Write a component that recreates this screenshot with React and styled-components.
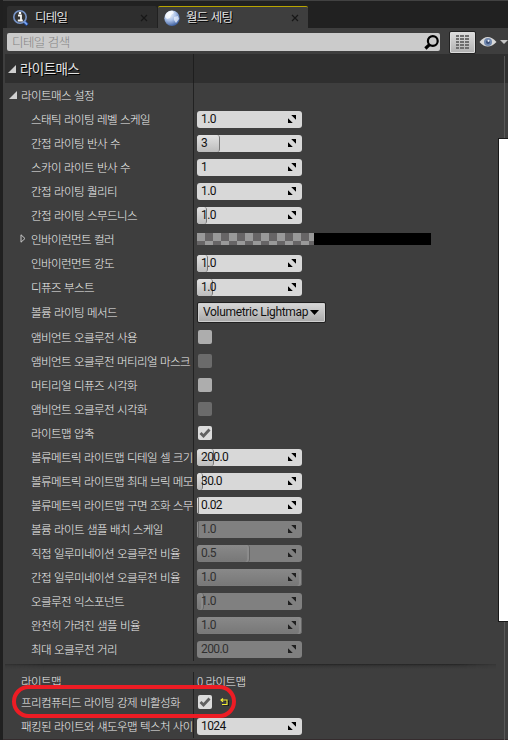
import React from "react";
import styled, { createGlobalStyle, css } from "styled-components";

const korean = `"Noto Sans CJK KR", "Noto Sans", sans-serif`;

const GlobalStyle = createGlobalStyle`
  * { box-sizing: border-box; }
  body { margin: 0; background: #3e3e3e; overflow: hidden; }
`;

const Window = styled.div`
  position: relative;
  width: 508px;
  height: 740px;
  padding-left: 3px;
  overflow: hidden;
  background: #3e3e3e;
  box-shadow: inset 3px 0 #202020, inset 0 -1px #352c2e;
  font-family: ${korean};
  font-size: 11.5px;
  font-weight: 300;
  letter-spacing: -0.58px;
  word-spacing: 1px;
  color: #f0f0f0;
`;

const TabBar = styled.div`
  display: flex;
  gap: 1px;
  height: 28px;
  padding: 5px 0 0 4px;
  background: #212121;
  border-top: 1px solid #424242;
`;

const Tab = styled.div`
  display: flex;
  align-items: center;
  width: 150px;
  height: 22px;
  padding: 0 9px 0 5px;
  gap: 5px;
  border-radius: 2px 2px 0 0;
  font-size: 12.5px;
  font-weight: 400;
  letter-spacing: -0.7px;
  color: #e0e0e0;
  text-shadow: 1px 1px 0 #000;
  background: ${(p) => (p.$active ? "#3e3e3e" : "#2e2e2e")};
  border-top: 1px solid ${(p) => (p.$active ? "#b9a500" : "#2e2e2e")};
`;

const TabLabel = styled.span`
  flex: 1;
  line-height: 19px;
  padding: 0 0 2px 0;
`;

const Toolbar = styled.div`
  display: flex;
  align-items: center;
  height: 26px;
  padding-left: 4px;
`;

const SearchBox = styled.div`
  display: flex;
  align-items: center;
  justify-content: space-between;
  width: 433px;
  height: 18px;
  margin: 2px 9px 0 0;
  padding: 0 1px 0 5px;
  border-radius: 2px;
  background: #cbcbcb;
  color: #848484;
  font-size: 12.5px;
  letter-spacing: -0.6px;
  line-height: 18px;
`;

const GridButton = styled.div`
  display: flex;
  align-items: center;
  justify-content: center;
  width: 27px;
  height: 23px;
  margin: 2px 3px 0 0;
  border: 1px solid #222;
  border-radius: 2px;
  background: linear-gradient(#dedede, #b0b0b0);
  box-shadow: inset 0 0 0 1px #dcdcdc;
`;

const EyeButton = styled.div`
  display: flex;
  margin-top: 2px;
`;

const CategoryHeader = styled.div`
  display: flex;
  height: 29px;
  margin-left: 2px;
  background: #2f2f2f;
  font-size: 13.5px;
  font-weight: 400;
  letter-spacing: -0.6px;
  color: #e2e2e2;
  text-shadow: 1px 1px 0 #000;
`;

const CategoryTitle = styled.div`
  display: flex;
  align-items: center;
  gap: 4px;
  width: 189px;
  padding: 0 0 1px 3px;
  border-right: 1px solid #1e1e1e;

  svg {
    margin-top: 2px;
  }
`;

const PropertyRow = styled.div`
  display: flex;
  height: ${(p) => p.$height || 24}px;
  margin-left: 2px;
`;

const NameCell = styled.div`
  display: flex;
  flex: none;
  align-items: center;
  width: 189px;
  padding: 0 0 1px ${(p) => p.$indent}px;
  white-space: nowrap;
  border-right: 1px solid #222;
`;

const Expander = styled.span`
  display: flex;
  width: ${(p) => p.$width}px;
  flex: none;
`;

const ValueCell = styled.div`
  display: flex;
  align-items: center;
  padding-left: 3px;
`;

const ValueText = styled.span`
  padding-bottom: 1px;
`;

const Spinner = styled.div`
  display: flex;
  align-items: center;
  justify-content: space-between;
  width: 105px;
  height: 17px;
  margin-bottom: -1px;
  padding: 0 5px 0 4px;
  border-radius: 3px;
  overflow: hidden;
  position: relative;
  background: ${(p) => (p.$disabled ? "#808080" : "#d8d8d8")};
  color: ${(p) => (p.$disabled ? "#303030" : "#111")};
  font: 12px/17px Roboto, sans-serif;
  letter-spacing: -0.6px;
  word-spacing: 0;
`;

const SpinnerFill = styled.span`
  position: absolute;
  inset: 0 auto 0 0;
  width: ${(p) => p.$width}px;
  border-radius: 3px;
  ${(p) =>
    p.$disabled
      ? css`
          background: linear-gradient(#898989, #777);
          border-right: 1px solid #666;
          box-shadow: inset -2px 0 1px #8c8c8c;
        `
      : css`
          background: linear-gradient(#e2e2e2, #bcbcbc);
          border-right: 1px solid #777;
        `}
`;

const SpinnerText = styled.span`
  position: relative;
`;

const SpinnerGlyph = styled.svg`
  position: relative;
  margin-bottom: 1px;
`;

const Check = styled.div`
  display: flex;
  align-items: center;
  justify-content: center;
  width: 14px;
  height: 14px;
  margin-left: 1px;
  border-radius: 2px;
  background: ${(p) => (p.$state === "on" ? "#dcdcdc" : p.$state === "off" ? "#adadad" : "#6b6b6b")};
`;

const Combo = styled.div`
  display: flex;
  align-items: center;
  justify-content: space-between;
  width: 129px;
  height: 21px;
  padding: 0 6px 0 5px;
  border: 1px solid #202020;
  border-radius: 2px;
  background: linear-gradient(#d8d8d8, #a9a9a9);
  box-shadow: inset 0 0 0 1px #cfcfcf;
  color: #111;
  font: 12px/19px Roboto, sans-serif;
  letter-spacing: -0.32px;
  word-spacing: 0;
  white-space: nowrap;

  svg {
    flex: none;
  }
`;

const ColorBar = styled.div`
  display: flex;
  width: 234px;
  height: 12px;
  background: #000;
  margin-top: -1px;
`;

const AlphaPreview = styled.div`
  width: 117px;
  background: repeating-conic-gradient(#676566 0 25%, #999 0 50%) 0 0 / 16px 16px;
`;

const GroupDivider = styled.div`
  height: 11px;
  padding-top: 3px;
  margin-left: 2px;
  width: 491px;

  &::before {
    content: "";
    display: block;
    height: 5px;
    background: linear-gradient(#232323, #353535 35%, #3e3e3e);
    mask-image: linear-gradient(90deg, rgba(0, 0, 0, 0.5), #000 8%, #000 92%, rgba(0, 0, 0, 0.3));
  }
`;

const ResetIcon = styled.svg`
  margin-left: 8px;
`;

const ScrollTrack = styled.div`
  position: absolute;
  top: 56px;
  right: 3px;
  bottom: 0;
  width: 1px;
  background: #575757;
`;

const ScrollCover = styled.div`
  position: absolute;
  top: 138px;
  right: 0;
  width: 10px;
  height: 484px;
  border: 1px solid #181818;
  border-right: 0;
  background: #fff;
`;

const Highlight = styled.div`
  position: absolute;
  left: 12px;
  top: 685px;
  width: 224px;
  height: 33px;
  border: 4px solid #ed1c24;
  border-radius: 17px;
`;

const CloseIcon = () => (
  <svg width="8" height="8" viewBox="0 0 8 8">
    <path d="M1 1l6 6M7 1L1 7" stroke="#171717" strokeWidth="1.2" />
  </svg>
);

const InfoIcon = () => (
  <svg width="18" height="18" viewBox="0 0 18 18">
    <path d="M11.5 12l4 4" stroke="#1d3f83" strokeWidth="3.6" />
    <path d="M11.5 12l3.7 3.7" stroke="#78a4f2" strokeWidth="1.8" />
    <circle cx="8" cy="8" r="6.2" fill="#343434" stroke="#7895c8" strokeWidth="1.6" />
    <path d="M6 6.5h3v5M5.8 11.5h5" stroke="#f5f5f5" strokeWidth="1.8" fill="none" />
    <circle cx="8" cy="4" r="1.3" fill="#fff" />
  </svg>
);

const GlobeIcon = () => (
  <svg width="18" height="18" viewBox="0 0 18 18">
    <defs>
      <radialGradient id="globe" cx="35%" cy="25%" r="80%">
        <stop offset="0" stopColor="#f4f7fc" />
        <stop offset=".5" stopColor="#a9bfe6" />
        <stop offset="1" stopColor="#345799" />
      </radialGradient>
    </defs>
    <circle cx="9" cy="9.3" r="7.7" fill="url(#globe)" />
    <path d="M3 5c2-3 5-3.500 7-3l1 2-3 2-1 3-3 1-2-2z" fill="#fff" opacity=".75" />
    <path d="M11 8l4-1 1 3-3 4-2-3z" fill="#e9f0fc" opacity=".75" />
  </svg>
);

const SearchIcon = () => (
  <svg width="15" height="16" viewBox="0 0 15 16">
    <circle cx="8.800" cy="7" r="4.900" fill="none" stroke="#000" strokeWidth="2.200" />
    <path d="M5.500 10.700L1.400 14.500" stroke="#000" strokeWidth="3.200" />
  </svg>
);

const GridIcon = () => (
  <svg width="13" height="14" viewBox="0 0 13 14">
    {[0, 3, 6, 9, 12].map((y) => (
      <path key={y} d={`M0 ${y + 1}h3M4 ${y + 1}h4M9 ${y + 1}h4`} stroke="#6e6e6e" strokeWidth="2" />
    ))}
  </svg>
);

const EyeIcon = () => (
  <svg width="29" height="12" viewBox="0 0 29 12">
    <path d="M.5 6Q8.500-4 17.500 6Q8.500 15 .5 6z" fill="#d9d9d9" />
    <circle cx="9" cy="6" r="4" fill="#7188ae" />
    <circle cx="9" cy="6" r="2" fill="#3a4f78" />
    <circle cx="9.500" cy="4.800" r="1.100" fill="#e8edf5" />
    <path d="M21 4h8l-4 4z" fill="#c4c4c4" />
  </svg>
);

const OpenArrow = () => (
  <svg width="8" height="8" viewBox="0 0 8 8">
    <path d="M8 0v8H0z" fill="#cfcfcf" />
  </svg>
);

const ClosedArrow = () => (
  <svg width="6" height="9" viewBox="0 0 6 9">
    <path d="M1 .8L5 4.500L1 8.200z" fill="none" stroke="#c8c8c8" />
  </svg>
);

const SpinIcon = ({ disabled }) => (
  <SpinnerGlyph width="10" height="10" viewBox="0 0 10 10">
    <path d="M4.200 1H9v4.800zM1 4.200V9h4.800z" fill={disabled ? "#202020" : "#000"} />
  </SpinnerGlyph>
);

const NumberInput = ({ value, fill, disabled }) => (
  <Spinner $disabled={disabled}>
    {fill > 0 && <SpinnerFill $width={fill} $disabled={disabled} />}
    <SpinnerText>{value}</SpinnerText>
    <SpinIcon disabled={disabled} />
  </Spinner>
);

const CheckBox = ({ state }) => (
  <Check $state={state}>
    {state === "on" && (
      <svg width="12" height="10" viewBox="0 0 12 10">
        <path d="M1.500 5L4.500 8L10.500 1.500" stroke="#616161" strokeWidth="2.800" fill="none" />
      </svg>
    )}
  </Check>
);

const properties = [
  { name: "스태틱 라이팅 레벨 스케일", value: "1.0" },
  { name: "간접 라이팅 반사 수", value: "3", fill: 23 },
  { name: "스카이 라이트 반사 수", value: "1" },
  { name: "간접 라이팅 퀄리티", value: "1.0" },
  { name: "간접 라이팅 스무드니스", value: "1.0", fill: 10 },
  { name: "인바이런먼트 컬러", color: true },
  { name: "인바이런먼트 강도", value: "1.0", fill: 11 },
  { name: "디퓨즈 부스트", value: "1.0", fill: 16 },
  { name: "볼륨 라이팅 메서드", combo: "Volumetric Lightmap" },
  { name: "앰비언트 오클루전 사용", check: "off" },
  { name: "앰비언트 오클루전 머티리얼 마스크", check: "disabled" },
  { name: "머티리얼 디퓨즈 시각화", check: "off" },
  { name: "앰비언트 오클루전 시각화", check: "disabled" },
  { name: "라이트맵 압축", check: "on" },
  { name: "볼류메트릭 라이트맵 디테일 셀 크기", value: "200.0", fill: 17 },
  { name: "볼류메트릭 라이트맵 최대 브릭 메모", value: "30.0", fill: 6 },
  { name: "볼류메트릭 라이트맵 구면 조화 스무", value: "0.02", fill: 2 },
  { name: "볼륨 라이트 샘플 배치 스케일", value: "1.0", disabled: true, fill: 2 },
  { name: "직접 일루미네이션 오클루전 비율", value: "0.5", disabled: true, fill: 53 },
  { name: "간접 일루미네이션 오클루전 비율", value: "1.0", disabled: true, fill: 105 },
  { name: "오클루전 익스포넌트", value: "1.0", disabled: true, fill: 7 },
  { name: "완전히 가려진 샘플 비율", value: "1.0", disabled: true, fill: 105 },
  { name: "최대 오클루전 거리", value: "200.0", disabled: true },
];

const PropertyValue = ({ item }) => {
  if (item.color) return <ColorBar><AlphaPreview /></ColorBar>;
  if (item.check) return <CheckBox state={item.check} />;
  if (item.combo)
    return (
      <Combo>
        {item.combo}
        <svg width="9" height="5" viewBox="0 0 9 5"><path d="M0 0h9L4.500 5z" fill="#000" /></svg>
      </Combo>
    );
  return <NumberInput {...item} />;
};

export default function App() {
  return (
    <Window>
      <GlobalStyle />
      <TabBar>
        <Tab><InfoIcon /><TabLabel>디테일</TabLabel><CloseIcon /></Tab>
        <Tab $active><GlobeIcon /><TabLabel>월드 세팅</TabLabel><CloseIcon /></Tab>
      </TabBar>
      <Toolbar>
        <SearchBox>디테일 검색<SearchIcon /></SearchBox>
        <GridButton><GridIcon /></GridButton>
        <EyeButton><EyeIcon /></EyeButton>
      </Toolbar>
      <CategoryHeader>
        <CategoryTitle><OpenArrow />라이트매스</CategoryTitle>
      </CategoryHeader>
      <PropertyRow>
        <NameCell $indent={4}><Expander $width={12}><OpenArrow /></Expander>라이트매스 설정</NameCell>
      </PropertyRow>
      {properties.map((item) => (
        <PropertyRow key={item.name} $height={item.combo ? 26 : 24}>
          <NameCell $indent={item.color ? 15 : 26}>
            {item.color && <Expander $width={11}><ClosedArrow /></Expander>}
            {item.name}
          </NameCell>
          <ValueCell><PropertyValue item={item} /></ValueCell>
        </PropertyRow>
      ))}
      <GroupDivider />
      <PropertyRow $height={18}>
        <NameCell $indent={16}>라이트맵</NameCell>
        <ValueCell><ValueText>0 라이트맵</ValueText></ValueCell>
      </PropertyRow>
      <PropertyRow $height={24}>
        <NameCell $indent={16}>프리컴퓨티드 라이팅 강제 비활성화</NameCell>
        <ValueCell>
          <CheckBox state="on" />
          <ResetIcon width="9" height="8" viewBox="0 0 9 8">
            <path d="M4 2.500h4v5H2.500" fill="none" stroke="#111" transform="translate(.8 .5)" />
            <path d="M1 2h6v4.500H2M3 .5L1 2l2 1.800" fill="none" stroke="#f3ee35" strokeWidth="1.100" />
          </ResetIcon>
        </ValueCell>
      </PropertyRow>
      <PropertyRow $height={24}>
        <NameCell $indent={16}>패킹된 라이트와 섀도우맵 텍스처 사이</NameCell>
        <ValueCell><NumberInput value="1024" /></ValueCell>
      </PropertyRow>
      <ScrollTrack />
      <ScrollCover />
      <Highlight />
    </Window>
  );
}
